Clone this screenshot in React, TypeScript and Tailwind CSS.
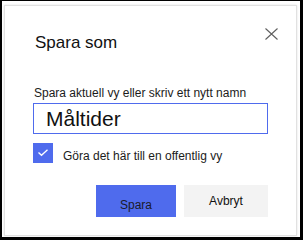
import React from "react";

export default function App() {
  return (
    <div
      className="w-[303px] h-[240px] bg-black pl-[2px] pt-[1px] pr-[3px] pb-[3px] flex"
      style={{ fontFamily: '"Liberation Sans", Arial, sans-serif' }}
    >
      <div className="flex-1 bg-white pl-[2px] pt-[4px] pr-[3px] pb-[1px] flex">
        <div className="relative flex-1 bg-white border border-[#e1e1e1] shadow-[0_0_2px_rgba(0,0,0,0.12)] flex flex-col pl-[28px] pr-[28px] pt-[25px] pb-[20px]">
          <button
            type="button"
            aria-label="Stäng"
            className="absolute top-[22px] right-[18px] w-[13px] h-[12px] flex items-center justify-center"
          >
            <svg width="13" height="12" viewBox="0 0 13 12" fill="none">
              <path d="M0.5 0.5 L12.5 11.5 M12.5 0.5 L0.5 11.5" stroke="#5f5f5f" strokeWidth="1.1" />
            </svg>
          </button>
          <div className="text-[17px] leading-[24px] text-[#111] pl-[2px]">Spara som</div>
          <div className="mt-[30px] text-[12px] leading-[16px] text-[#1b1b1b] pl-[1px]">
            Spara aktuell vy eller skriv ett nytt namn
          </div>
          <div className="mt-[2px] h-[31px] border border-[#4f6bed] pl-[12px] pt-[1px] text-[21px] leading-[28px] text-[#111]">
            Måltider
          </div>
          <div className="mt-[9px] flex items-start gap-[10px]">
            <div className="w-[20px] h-[20px] bg-[#4f6bed] shrink-0">
              <svg width="20" height="20" viewBox="0 0 20 20" fill="none">
                <path d="M5.5 9.5 L8.5 12.3 L14.5 6.8" stroke="#ffffff" strokeWidth="1.3" />
              </svg>
            </div>
            <div className="mt-[5px] text-[12px] leading-[17px] text-[#1b1b1b]">
              Göra det här till en offentlig vy
            </div>
          </div>
          <div className="mt-[20px] flex justify-end gap-[8px]">
            <button
              type="button"
              className="w-[80px] h-[32px] bg-[#4f6bed] text-[12px] leading-[16px] text-[#1a1a2a] pt-[7px] flex items-center justify-center"
            >
              Spara
            </button>
            <button
              type="button"
              className="w-[84px] h-[32px] bg-[#f3f3f3] text-[12px] leading-[16px] text-[#111] flex items-center justify-center"
            >
              Avbryt
            </button>
          </div>
        </div>
      </div>
    </div>
  );
}
